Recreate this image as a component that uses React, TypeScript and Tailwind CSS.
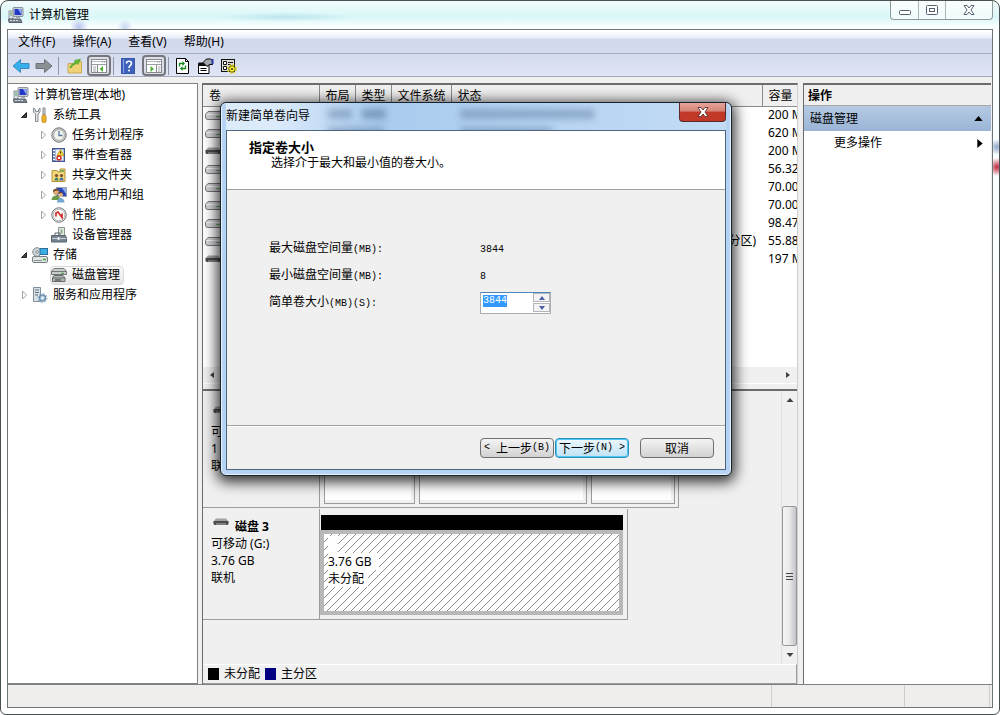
import type { ReactNode } from "react";

interface TreeItem {
  label: string;
  level: number;
  arrow?: "open" | "closed";
  icon: ReactNode;
  selected?: boolean;
}

interface Volume {
  capacity: string;
  status?: string;
  dark?: boolean;
}

const ComputerIcon = () => (
  <svg className="h-4 w-4 shrink-0" viewBox="0 0 16 16">
    <rect x="5" y="0.5" width="10" height="9" rx="1" fill="#c8ced6" stroke="#8b939d" />
    <rect x="6.5" y="2" width="7" height="6" fill="#2338c4" />
    <path d="M10 2h3.5v6z" fill="#8ea8f0" />
    <rect x="1" y="4" width="4" height="8" fill="#dfe4e8" stroke="#8b959f" />
    <path d="M2 6h2M2 8h2" stroke="#4e9c4e" />
    <path d="M0.5 12h12l1.5 3.5h-13z" fill="#75808a" stroke="#5d6670" />
    <path d="M2 13.5h9" stroke="#d8dde2" strokeDasharray="2 1" />
    <path d="M8 10h4v2H8z" fill="#a5adb5" />
  </svg>
);

const ToolsIcon = () => (
  <svg className="h-4 w-4 shrink-0" viewBox="0 0 16 16">
    <path d="M1.500 1v4l2 2v7.500h2.500V7l2-2V1L6.500 2.500v2H3.500v-2z" fill="#e3e6e8" stroke="#858c92" />
    <path d="M11 1h2v7h-2z" fill="#d4d8dc" stroke="#858c92" />
    <rect x="10" y="8" width="4" height="7.500" rx="1.500" fill="#f0b32a" stroke="#c48f1c" />
  </svg>
);

const ClockIcon = () => (
  <svg className="h-4 w-4 shrink-0" viewBox="0 0 16 16">
    <circle cx="8" cy="8" r="7.200" fill="#c6c9cb" stroke="#77797b" />
    <circle cx="8" cy="8" r="5.300" fill="#f3f4ee" stroke="#b3b5a8" />
    <path d="M8 4v4.500h3.500" fill="none" stroke="#5576a6" strokeWidth="1.300" />
  </svg>
);

const EventIcon = () => (
  <svg className="h-4 w-4 shrink-0" viewBox="0 0 16 16">
    <rect x="1.500" y="1.500" width="12" height="13" fill="#7089be" stroke="#3f568e" />
    <rect x="4.500" y="2.500" width="8" height="11" fill="#e9effa" />
    <path d="M2 3.500h2M2 6.500h2M2 9.500h2M2 12.500h2" stroke="#fff" />
    <path d="M9.500 2.500l3.500 6H6z" fill="#f5cf29" stroke="#b78f10" strokeWidth="0.700" />
    <path d="M9.500 4.500v2" stroke="#333" />
    <circle cx="8" cy="11" r="2.700" fill="#d8302c" />
    <path d="M7 10l2 2m0-2l-2 2" stroke="#fff" />
  </svg>
);

const SharedIcon = () => (
  <svg className="h-4 w-4 shrink-0" viewBox="0 0 16 16">
    <path d="M1 3.500h5l1 1.500h2V2h5v12.500H1z" fill="#f1d67a" stroke="#b99438" />
    <path d="M9 3h4v2H9z" fill="#7fae55" />
    <circle cx="5.500" cy="8.500" r="1.600" fill="#7b512b" />
    <path d="M3.500 13.500c0-4 4-4 4 0z" fill="#3f7f62" />
    <circle cx="10.500" cy="8.500" r="1.600" fill="#7b512b" />
    <path d="M8.500 13.500c0-4 4-4 4 0z" fill="#4c72a8" />
  </svg>
);

const UsersIcon = () => (
  <svg className="h-4 w-4 shrink-0" viewBox="0 0 16 16">
    <rect x="5.500" y="0.500" width="10" height="9" fill="#2745b8" stroke="#9aa4b4" />
    <path d="M11 1h4v6z" fill="#8eacee" />
    <circle cx="5" cy="5" r="3" fill="#d9a878" />
    <path d="M2 5c-.5-4 6-4 6-1L5 3.500z" fill="#684827" />
    <path d="M0.500 13c0-6 9-6 9 0z" fill="#6a9a45" />
    <circle cx="9.500" cy="7.500" r="2.500" fill="#e0b68d" />
    <path d="M7 7c0-3 5-3 5 0l-2-1z" fill="#584331" />
    <path d="M6 15.500c0-6 7.500-6 7.500 0z" fill="#74a6d4" />
  </svg>
);

const PerfIcon = () => (
  <svg className="h-4 w-4 shrink-0" viewBox="0 0 16 16">
    <circle cx="8" cy="8" r="7.200" fill="#f7f7f5" stroke="#6d7072" />
    <circle cx="8" cy="8" r="5.800" fill="none" stroke="#b9bbbc" />
    <path d="M5 9.500V6l2-1 4 5.500V6.500" fill="none" stroke="#cf2f2b" strokeWidth="1.700" />
  </svg>
);

const DeviceIcon = () => (
  <svg className="h-4 w-4 shrink-0" viewBox="0 0 16 16">
    <path d="M7.500 0.500h6v10h-6z" fill="#e3e8e3" stroke="#8b938f" />
    <rect x="9.500" y="2.500" width="2" height="4" fill="#8fb083" />
    <path d="M4 8V6h5v2" fill="none" stroke="#5a6470" />
    <path d="M0.500 8.500h14l1 3v3.500h-15z" fill="#75828f" stroke="#5a646e" />
    <path d="M1 11.500h14" stroke="#c7d0d8" />
    <rect x="6.500" y="10" width="2" height="3" fill="#e5e9ec" />
  </svg>
);

const StorageIcon = () => (
  <svg className="h-4 w-4 shrink-0" viewBox="0 0 16 16">
    <circle cx="5" cy="5" r="4.300" fill="#cfd6d9" stroke="#838c90" />
    <circle cx="5" cy="5" r="1.300" fill="#fff" stroke="#838c90" />
    <rect x="8" y="1.500" width="7.500" height="6" fill="#39aee2" stroke="#2d6d9c" />
    <rect x="0.500" y="9.500" width="15" height="6" rx="1.500" fill="#e1e4e4" stroke="#757c7f" />
    <path d="M2 13.500h8" stroke="#8b9294" />
    <path d="M11 12.500h3" stroke="#3d9c35" strokeWidth="1.500" />
  </svg>
);

const DiskMgmtIcon = () => (
  <svg className="h-4 w-4 shrink-0" viewBox="0 0 16 16">
    <path d="M3 1.500h10l2.500 3v3H0.500v-3z" fill="#c9cccc" stroke="#747878" />
    <path d="M0.500 4.500h15" stroke="#747878" />
    <path d="M3 8.500h9l2 2.500v3.500H1.500V11z" fill="#b2b6b6" stroke="#666a6a" />
    <path d="M1.500 11h12.500" stroke="#666a6a" />
    <path d="M10 6.300h3" stroke="#3d9c35" />
    <path d="M4 13h6" stroke="#3a3d3d" />
  </svg>
);

const ServicesIcon = () => (
  <svg className="h-4 w-4 shrink-0" viewBox="0 0 16 16">
    <path d="M1.500 0.500h7v14h-7z" fill="#d7e0e6" stroke="#81909c" />
    <path d="M3 3h4M3 5.500h4M3 8h3" stroke="#60717e" />
    <circle cx="10.500" cy="11" r="3" fill="#b8cfe4" stroke="#6d8fb0" strokeWidth="1.500" />
    <circle cx="10.500" cy="11" r="4.500" fill="none" stroke="#6d8fb0" strokeDasharray="1.500 2" />
    <circle cx="10.500" cy="11" r="1" fill="#fff" />
  </svg>
);

const DriveIcon = ({ dark }: { dark?: boolean }) =>
  dark ? (
    <svg className="h-2 w-4 shrink-0" viewBox="0 0 16 8">
      <path d="M3 0.500h10l2.500 3H.5z" fill="#a2a2a2" />
      <path d="M0.500 3h15v2.500q0 1.500-2 1.500h-11q-2 0-2-1.500z" fill="#4b4b4b" />
      <path d="M3 5h10v2H3z" fill="#7f7f7f" />
    </svg>
  ) : (
    <svg className="h-[9px] w-4 shrink-0" viewBox="0 0 16 9">
      <path d="M3 0.500h12.500v8H3q-2.500 0-2.500-2.500V3.500z" fill="#d4d4d8" stroke="#77777b" />
      <path d="M1.500 3.500h14" stroke="#f7f7f7" />
      <path d="M11.500 5.500h3" stroke="#4ea24a" />
    </svg>
  );

const Arrow = ({ right }: { right?: boolean }) => (
  <svg className="h-4 w-[18px]" viewBox="0 0 18 16">
    {right ? (
      <path d="M17 8L9.500 1.500v4H1v5h8.500v4z" fill="#8c8f93" stroke="#6f7276" />
    ) : (
      <path d="M1 8l7.500-6.500v4H17v5H8.500v4z" fill="#38aeea" stroke="#3a8cc4" />
    )}
  </svg>
);

const FolderUpIcon = () => (
  <svg className="h-4 w-4" viewBox="0 0 16 16">
    <path d="M1 5.500h6l1-2h6.500V15H1z" fill="#f0d276" stroke="#c9a95a" />
    <path d="M3 9.500c1-3 3-4.500 5.500-5L7.500 2.500l6-1.500-2.500 5.500L10 5.500C7.500 6 5.500 7.500 4 10z" fill="#63bb38" stroke="#4a9a2c" strokeWidth="0.600" />
  </svg>
);

const PaneIcon = ({ flip }: { flip?: boolean }) => (
  <svg className="h-4 w-4" viewBox="0 0 16 16">
    <rect x="0.500" y="1.500" width="15" height="13" fill="#fff" stroke="#85888d" />
    <path d="M1 3.500h14" stroke="#b3b6bb" />
    <path d="M1 6.500h14" stroke="#9a9da3" />
    <path d="M11 4h1M13 4h1" stroke="#85888d" />
    {flip ? (
      <>
        <path d="M10.500 7v7" stroke="#85888d" />
        <path d="M12 9h2.500M12 11h2.500M12 13h2.500" stroke="#a0a3a8" />
        <path d="M4.500 8l3.500 3-3.500 3z" fill="#4cae32" />
      </>
    ) : (
      <>
        <path d="M6.500 7v7" stroke="#85888d" />
        <path d="M2 9h3M2 11h3M2 13h3" stroke="#a0a3a8" />
        <path d="M12 8l-3.500 3 3.500 3z" fill="#4cae32" />
      </>
    )}
  </svg>
);

const HelpIcon = () => (
  <svg className="h-4 w-4" viewBox="0 0 16 16">
    <rect x="1.500" y="0.500" width="13" height="15" fill="#3f62c0" stroke="#3a57a4" />
    <path d="M3.500 1v14" stroke="#87a1e2" />
    <path d="M6.500 5.500c0-3 5-3 5 0 0 2-2.500 2-2.500 4.500" fill="none" stroke="#fff" strokeWidth="1.600" />
    <circle cx="9" cy="12.500" r="1" fill="#fff" />
  </svg>
);

const RefreshIcon = () => (
  <svg className="h-4 w-4" viewBox="0 0 16 16">
    <path d="M1.500 0.500h9l3 3v12h-12z" fill="#fff" stroke="#000" />
    <path d="M10.500 0.500v3h3" fill="none" stroke="#000" />
    <path d="M4.500 8.500V5.500h4M10.500 7.500v3h-4" fill="none" stroke="#148a1c" strokeWidth="1.300" />
    <path d="M7.500 3l2.500 2.500L7.500 8zM7.500 8L5 10.500 7.500 13z" fill="#148a1c" />
  </svg>
);

const PropertiesIcon = () => (
  <svg className="h-4 w-4" viewBox="0 0 16 16">
    <path d="M0.500 5.500h10.500V15.500H0.500z" fill="#fff" stroke="#000" />
    <path d="M0.500 4.500h10v3.500h-10z" fill="#111" />
    <path d="M2.500 10.500h6M2.500 12.500h6" stroke="#000" />
    <path d="M5 4.500L8.500 1h4l2 1.500v4l-3 0-2.500 2-2-2z" fill="#a4a8ac" stroke="#000" />
    <path d="M14.500 1v5" stroke="#2537a5" strokeWidth="2" />
  </svg>
);

const SettingsIcon = () => (
  <svg className="h-4 w-4" viewBox="0 0 16 16">
    <rect x="0.500" y="1.500" width="13" height="12" fill="#dcdcd5" stroke="#111" />
    <path d="M2.500 3.500h3v3h-3zM2.500 8.500h3v3h-3z" fill="#fff" stroke="#111" />
    <path d="M7 4.500h5M7 6.500h3" stroke="#111" />
    <circle cx="11" cy="11" r="3.300" fill="#f4e92c" stroke="#3b3800" strokeWidth="0.800" />
    <circle cx="11" cy="11" r="4.300" fill="none" stroke="#e8da16" strokeWidth="1.300" strokeDasharray="1.700 1.700" />
    <circle cx="11" cy="11" r="1" fill="#333" />
  </svg>
);

const treeItems: TreeItem[] = [
  { label: "计算机管理(本地)", level: 0, icon: <ComputerIcon /> },
  { label: "系统工具", level: 1, arrow: "open", icon: <ToolsIcon /> },
  { label: "任务计划程序", level: 2, arrow: "closed", icon: <ClockIcon /> },
  { label: "事件查看器", level: 2, arrow: "closed", icon: <EventIcon /> },
  { label: "共享文件夹", level: 2, arrow: "closed", icon: <SharedIcon /> },
  { label: "本地用户和组", level: 2, arrow: "closed", icon: <UsersIcon /> },
  { label: "性能", level: 2, arrow: "closed", icon: <PerfIcon /> },
  { label: "设备管理器", level: 2, icon: <DeviceIcon /> },
  { label: "存储", level: 1, arrow: "open", icon: <StorageIcon /> },
  { label: "磁盘管理", level: 2, icon: <DiskMgmtIcon />, selected: true },
  { label: "服务和应用程序", level: 1, arrow: "closed", icon: <ServicesIcon /> },
];

const volumes: Volume[] = [
  { capacity: "200 MB" },
  { capacity: "620 MB" },
  { capacity: "200 MB", dark: true },
  { capacity: "56.32 GB" },
  { capacity: "70.00 GB" },
  { capacity: "70.00 GB" },
  { capacity: "98.47 GB" },
  { capacity: "55.88 GB", status: "分区)" },
  { capacity: "197 MB", dark: true },
];

const menus = ["文件(F)", "操作(A)", "查看(V)", "帮助(H)"];

const columns = [
  { label: "卷", width: "w-[116px]" },
  { label: "布局", width: "w-9" },
  { label: "类型", width: "w-9" },
  { label: "文件系统", width: "w-[60px]" },
  { label: "状态", width: "" },
  { label: "容量", width: "w-[35px]" },
];

const TitleBar = () => (
  <div className="flex h-7 items-start">
    <div className="flex h-7 flex-1 items-center gap-[5px] pl-px">
      <ComputerIcon />
      <h1 className="text-xs leading-4">计算机管理</h1>
    </div>
    <div className="flex h-[19px] overflow-hidden rounded-b border border-t-0 border-[#8d9a9c] bg-white/60">
      <button aria-label="最小化" className="flex w-7 items-center justify-center border-r border-[#a9b5b7]">
        <svg className="h-3 w-3" viewBox="0 0 12 12">
          <rect x="0.500" y="6.500" width="11" height="4" rx="1" fill="#fff" stroke="#555f70" />
        </svg>
      </button>
      <button aria-label="最大化" className="flex w-[27px] items-center justify-center border-r border-[#a9b5b7]">
        <svg className="h-3 w-3" viewBox="0 0 12 12">
          <rect x="0.500" y="1.500" width="11" height="9" rx="1" fill="#fff" stroke="#555f70" />
          <rect x="3.500" y="4.500" width="5" height="3" fill="#fff" stroke="#555f70" />
        </svg>
      </button>
      <button aria-label="关闭" className="flex w-[46px] items-center justify-center">
        <svg className="h-3 w-3" viewBox="0 0 12 12">
          <path d="M1 1.500h3l2 2.500 2-2.500h3L8 6l3 4.500H8L6 8l-2 2.500H1L4 6z" fill="#fff" stroke="#555f70" />
        </svg>
      </button>
    </div>
  </div>
);

const ToolSeparator = () => <div className="h-[18px] w-px bg-[#8f97a8]" />;

const Toolbar = () => (
  <div className="flex h-[23px] items-center border-b border-[#a5abb8] bg-linear-to-b from-[#d3daed] to-[#e0e6f6] pt-px pl-1">
    <button aria-label="后退" className="w-[23px]"><Arrow /></button>
    <button aria-label="前进" className="w-[23px]"><Arrow right /></button>
    <ToolSeparator />
    <button aria-label="上一级" className="flex w-7 justify-center pl-1"><FolderUpIcon /></button>
    <button aria-label="显示或隐藏控制台树" className="flex h-[21px] w-6 items-center justify-center rounded border-2 border-[#75777d] bg-[#dcdfe8]">
      <PaneIcon />
    </button>
    <div className="w-0.5" />
    <ToolSeparator />
    <button aria-label="帮助" className="flex w-7 justify-center"><HelpIcon /></button>
    <button aria-label="显示或隐藏操作窗格" className="flex h-[21px] w-6 items-center justify-center rounded border-2 border-[#75777d] bg-[#dcdfe8]">
      <PaneIcon flip />
    </button>
    <div className="w-0.5" />
    <ToolSeparator />
    <div className="flex gap-[7px] pl-1.5">
      <button aria-label="刷新"><RefreshIcon /></button>
      <button aria-label="属性"><PropertiesIcon /></button>
      <button aria-label="设置"><SettingsIcon /></button>
    </div>
  </div>
);

const indents = ["pl-1", "pl-2", "pl-[27px]"];

const Tree = () => (
  <nav className="w-[190px] shrink-0 border border-l-0 border-[#828282] bg-white pt-px">
    <ul>
      {treeItems.map((item) => (
        <li key={item.label} className={`flex h-5 items-center ${indents[item.level]}`}>
          {item.level > 0 && (
            <span className="flex w-[15px] justify-center">
              {item.arrow === "open" && (
                <svg className="h-2 w-2" viewBox="0 0 8 8">
                  <path d="M6.500 1.500v5h-5z" fill="#404040" stroke="#262626" />
                </svg>
              )}
              {item.arrow === "closed" && (
                <svg className="h-2.5 w-2" viewBox="0 0 8 10">
                  <path d="M2.500 1l4 4-4 4z" fill="#fff" stroke="#a3a3a3" />
                </svg>
              )}
            </span>
          )}
          <span
            className={
              item.selected
                ? "flex h-[19px] items-center gap-[5px] rounded-sm border border-[#d9d9d9] bg-linear-to-b from-[#fafafa] to-[#e6e6e6] pr-[3px]"
                : "flex items-center gap-[5px] pl-px"
            }
          >
            {item.icon}
            {item.label}
          </span>
        </li>
      ))}
    </ul>
  </nav>
);

const VolumeList = () => (
  <div className="flex h-[306px] flex-col border-b-2 border-[#6c6c6c] bg-white">
    <div className="flex-1">
      <table className="w-full table-fixed border-collapse">
        <thead>
          <tr>
            {columns.map((col) => (
              <th
                key={col.label}
                className={`h-[21px] overflow-hidden border-r border-b border-[#8a8a8a] bg-[#f0f0f0] pt-0.5 pl-1.5 text-left font-normal whitespace-nowrap last:border-r-0 ${col.width}`}
              >
                {col.label}
              </th>
            ))}
          </tr>
        </thead>
        <tbody>
          {volumes.map((v, i) => (
            <tr key={i} className="h-[18px]">
              <td className="pl-0.5"><DriveIcon dark={v.dark} /></td>
              <td />
              <td />
              <td />
              <td className="pr-1.5 text-right">{v.status}</td>
              <td className="overflow-hidden pl-1.5 whitespace-nowrap">{v.capacity}</td>
            </tr>
          ))}
        </tbody>
      </table>
    </div>
    <div className="flex h-4 items-center justify-between bg-[#f0f0f0] px-1.5">
      <svg className="h-2 w-1.5" viewBox="0 0 6 8"><path d="M5 1v6L1 4z" fill="#404040" /></svg>
      <svg className="h-2 w-1.5" viewBox="0 0 6 8"><path d="M1 1v6l4-3z" fill="#404040" /></svg>
    </div>
    <div className="h-1.5 border-t border-white bg-[#f0f0f0]" />
  </div>
);

const DiskLabel = ({ lines, title }: { lines: string[]; title?: string }) => (
  <div className="w-[117px] border-r border-b border-[#9c9c9c] pl-2 leading-[17px]">
    <div className="flex h-[26px] items-center gap-1.5 pt-2">
      <div className="-mt-2 pl-0.5"><DriveIcon dark /></div>
      <b>{title}</b>
    </div>
    {lines.map((line) => (
      <p key={line}>{line}</p>
    ))}
  </div>
);

const Partition = ({ width }: { width: string }) => (
  <div className={`border border-[#9c9c9c] bg-white shadow-[inset_-3px_-3px_0_#f0f0f0] ${width}`} />
);

const DiskPane = () => (
  <div className="flex flex-1 flex-col">
    <div className="flex flex-1">
      <div className="flex-1 pt-1.5">
        <div className="flex h-[112px] pb-px">
          <DiskLabel lines={["可移动", "1", "联机"]} />
          <div className="flex gap-1 border-r border-b border-[#9c9c9c] pr-[3px] pb-[3px] pl-1">
            <Partition width="w-[91px]" />
            <Partition width="w-[168px]" />
            <Partition width="w-[84px]" />
          </div>
        </div>
        <div className="flex h-[111px]">
          <DiskLabel title="磁盘 3" lines={["可移动 (G:)", "3.76 GB", "联机"]} />
          <div className="flex w-[308px] flex-col border-r border-b border-[#9c9c9c] pt-1.5 pr-1 pb-1">
            <div className="ml-px h-[15px] bg-black" />
            <div className="relative flex-1 border-4 border-[#b8b8b8] bg-white">
              <svg className="absolute inset-0 h-full w-full">
                <defs>
                  <pattern id="hatch" width="8" height="8" patternUnits="userSpaceOnUse">
                    <path d="M-1 9L9 -1" stroke="#8c8c8c" strokeWidth="1" />
                  </pattern>
                </defs>
                <rect width="100%" height="100%" fill="url(#hatch)" />
              </svg>
              <div className="relative flex flex-col items-start px-1 pt-0.5 leading-[17px]">
                <span className="h-[17px] w-2.5 bg-white" />
                <span className="bg-white pr-2">3.76 GB</span>
                <span className="bg-white pr-1">未分配</span>
              </div>
            </div>
          </div>
        </div>
      </div>
      <div className="flex w-4 flex-col items-center border-l border-[#e2e2e2] pt-1.5">
        <svg className="h-1.5 w-2" viewBox="0 0 8 6"><path d="M0.500 5h7L4 1z" fill="#404040" /></svg>
        <div className="flex-1" />
        <div className="flex h-[140px] w-[15px] items-center justify-center rounded-xs border border-[#979797] bg-linear-to-r from-[#f5f5f5] via-[#e9e9eb] to-[#c2c2ca]">
          <div className="flex w-[7px] flex-col gap-0.5">
            <div className="h-px bg-[#444]" />
            <div className="h-px bg-[#444]" />
            <div className="h-px bg-[#444]" />
          </div>
        </div>
        <div className="flex h-[18px] items-center">
          <svg className="h-1.5 w-2" viewBox="0 0 8 6"><path d="M0.500 1h7L4 5z" fill="#404040" /></svg>
        </div>
      </div>
    </div>
    <div className="flex h-5 items-center gap-[5px] border-t border-r border-b border-t-white border-r-[#9c9c9c] border-b-[#9c9c9c] pl-[5px]">
      <span className="h-3 w-[11px] bg-black" />
      未分配
      <span className="h-3 w-[11px] bg-[#000080]" />
      主分区
    </div>
  </div>
);

const Actions = () => (
  <aside className="w-[188px] shrink-0 border-t-2 border-l border-[#6c6c6c] bg-white">
    <h2 className="h-[21px] border-b border-[#a8a8a8] bg-[#f0f0f0] pt-px pl-1 leading-5 font-bold">操作</h2>
    <button className="flex h-[25px] w-full items-center justify-between bg-linear-to-b from-[#b4cae3] to-[#9bb5d6] pr-2 pl-1.5">
      磁盘管理
      <svg className="h-[5px] w-[9px]" viewBox="0 0 10 6"><path d="M0 6h10L5 0z" /></svg>
    </button>
    <button className="flex h-6 w-full items-center justify-between pr-2 pl-[30px]">
      更多操作
      <svg className="h-[9px] w-1.5" viewBox="0 0 6 10"><path d="M0 0v10l6-5z" /></svg>
    </button>
  </aside>
);

const Half = ({ children }: { children: ReactNode }) => (
  <span className="font-['Liberation_Mono',monospace] text-[10px]">{children}</span>
);

const wizardButton =
  "flex h-5 w-[74px] items-center justify-center rounded-sm border whitespace-pre leading-4";

const Wizard = () => (
  <div
    role="dialog"
    aria-label="新建简单卷向导"
    className="absolute top-[101px] left-[219px] flex w-[512px] flex-col rounded-md border border-[#17222e] bg-[#b5d3f3] px-[5px] pb-[5px] font-['Noto_Sans_CJK_SC',sans-serif] shadow-[inset_0_0_0_1px_#e9f3fd,0_3px_14px_3px_rgba(0,0,0,0.8)]"
  >
    <div className="relative flex h-[27px] items-start justify-between overflow-hidden bg-linear-to-r from-[#dcebfa] from-10% via-[#a9cbee] via-30% to-[#c3dcf5]">
      <div className="absolute top-1.5 left-[102px] h-2.5 w-6 bg-[#4f6f93]/40 blur-[3px]" />
      <div className="absolute top-1.5 left-[136px] h-2.5 w-6 bg-[#4f6f93]/50 blur-[3px]" />
      <div className="absolute top-1.5 left-[234px] h-2.5 w-[134px] bg-[#4f6f93]/40 blur-[3px]" />
      <div className="absolute top-6 left-[102px] h-2.5 w-14 bg-[#4f6f93]/40 blur-[3px]" />
      <div className="absolute top-6 left-[234px] h-2.5 w-[92px] bg-[#4f6f93]/40 blur-[3px]" />
      <h2 className="relative pt-1 leading-4">新建简单卷向导</h2>
      <button aria-label="关闭" className="relative flex h-[19px] w-[47px] items-center justify-center rounded-b border border-t-0 border-[#5b2a28] bg-linear-to-b from-[#e6a499] via-[#d68476] via-45% to-[#c2392a] to-50%">
        <svg className="h-3 w-3" viewBox="0 0 12 12">
          <path d="M1 1.500h3l2 2.500 2-2.500h3L8 6l3 4.500H8L6 8l-2 2.500H1L4 6z" fill="#fff" stroke="#6b3b3b" />
        </svg>
      </button>
    </div>
    <div className="border border-[#4d6580] bg-[#f0f0f0]">
      <div className="h-[59px] border-b border-[#a0a0a0] bg-white pt-2 pl-[22px]">
        <h3 className="text-[13px] leading-4 font-bold">指定卷大小</h3>
        <p className="pl-[22px] leading-[14px]">选择介于最大和最小值的卷大小。</p>
      </div>
      <dl className="grid h-[235px] auto-rows-[27px] grid-cols-[211px_auto] content-start pt-[43px] pl-[42px] leading-[27px]">
        <dt>最大磁盘空间量<Half>(MB):</Half></dt>
        <dd><Half>3844</Half></dd>
        <dt>最小磁盘空间量<Half>(MB):</Half></dt>
        <dd><Half>8</Half></dd>
        <dt><label htmlFor="size">简单卷大小<Half>(MB)(S):</Half></label></dt>
        <dd className="flex pt-[5px]">
          <div className="flex h-[22px] w-[71px] border border-[#abadb3] border-t-[#4f86b8] bg-white pb-px">
            <input
              id="size"
              defaultValue="3844"
              autoFocus
              onFocus={(e) => e.target.select()}
              className="mt-0.5 h-3 w-[52px] pl-0.5 font-['Liberation_Mono',monospace] text-[10px] leading-3 outline-none selection:bg-[#3399ff] selection:text-white"
            />
            <div className="flex flex-1 flex-col gap-px">
              <button aria-label="增加" className="flex flex-1 items-center justify-center border border-[#b4b6bc] bg-[#f3f3f5]">
                <svg className="h-1 w-1.5" viewBox="0 0 6 4"><path d="M0 4h6L3 0z" fill="#4b5fa5" /></svg>
              </button>
              <button aria-label="减少" className="flex flex-1 items-center justify-center border border-[#b4b6bc] bg-[#f3f3f5]">
                <svg className="h-1 w-1.5" viewBox="0 0 6 4"><path d="M0 0h6L3 4z" fill="#4b5fa5" /></svg>
              </button>
            </div>
          </div>
        </dd>
      </dl>
      <div className="flex h-11 justify-end border-t border-[#a0a0a0] pt-3 pr-[11px] shadow-[inset_0_1px_0_#fff]">
        <button className={`${wizardButton} border-[#707070] bg-linear-to-b from-[#f4f4f4] to-[#d2d2d2]`}>
          <Half>&lt; </Half>上一步<Half>(B)</Half>
        </button>
        <button className={`${wizardButton} ml-px border-[#2c8fc0] bg-linear-to-b from-[#eef8fd] to-[#bfe2f4] shadow-[inset_0_0_0_1px_#4dc8ef]`}>
          下一步<Half>(N) &gt;</Half>
        </button>
        <button className={`${wizardButton} ml-[11px] border-[#707070] bg-linear-to-b from-[#f4f4f4] to-[#d2d2d2]`}>
          取消
        </button>
      </div>
    </div>
  </div>
);

const App = () => {
  return (
    <div className="relative flex min-h-screen flex-col overflow-hidden rounded-t-lg rounded-b-md border border-[#4a5052] bg-[radial-gradient(circle_at_78px_26px,#b9c4ee_0,transparent_9px),radial-gradient(circle_at_124px_26px,#c9d6f2_0,transparent_8px),radial-gradient(ellipse_70px_5px_at_285px_16px,#bfe6ee_0,transparent_100%),radial-gradient(circle_at_996px_166px,#c0283f_0,transparent_9px),radial-gradient(circle_at_996px_146px,#8fa8c8_0,transparent_8px),linear-gradient(#f2fbfb_0,#d9f7f8_16px,#fbffff_26px,#fff_100%)] px-1.5 pb-1.5 font-['Noto_Sans','Noto_Sans_CJK_SC',sans-serif] text-xs leading-4 text-black">
      <TitleBar />
      <div className="flex flex-1 flex-col border border-[#6f7678] bg-[#f0f0f0]">
        <div className="flex h-6 items-center gap-[17px] border-b border-[#a9afbd] bg-linear-to-b from-white from-5% via-[#e9edf7] via-35% to-[#d3daed] to-40% pl-2.5">
          {menus.map((menu) => (
            <button key={menu}>{menu}</button>
          ))}
        </div>
        <Toolbar />
        <main className="flex flex-1 pt-1.5 pr-px">
          <Tree />
          <section className="mr-[5px] ml-1 flex min-w-0 flex-1 flex-col border-t-2 border-r border-l border-[#6c6c6c] border-r-[#d0d0d0]">
            <VolumeList />
            <DiskPane />
          </section>
          <Actions />
        </main>
        <footer className="flex h-[23px] justify-end border-t border-[#808080] bg-[#f0eded] pr-0.5">
          <div className="w-[133px] border-l border-[#cfcccc]" />
          <div className="w-[86px] border-x border-[#cfcccc]" />
        </footer>
      </div>
      <Wizard />
    </div>
  );
};

export default App;
